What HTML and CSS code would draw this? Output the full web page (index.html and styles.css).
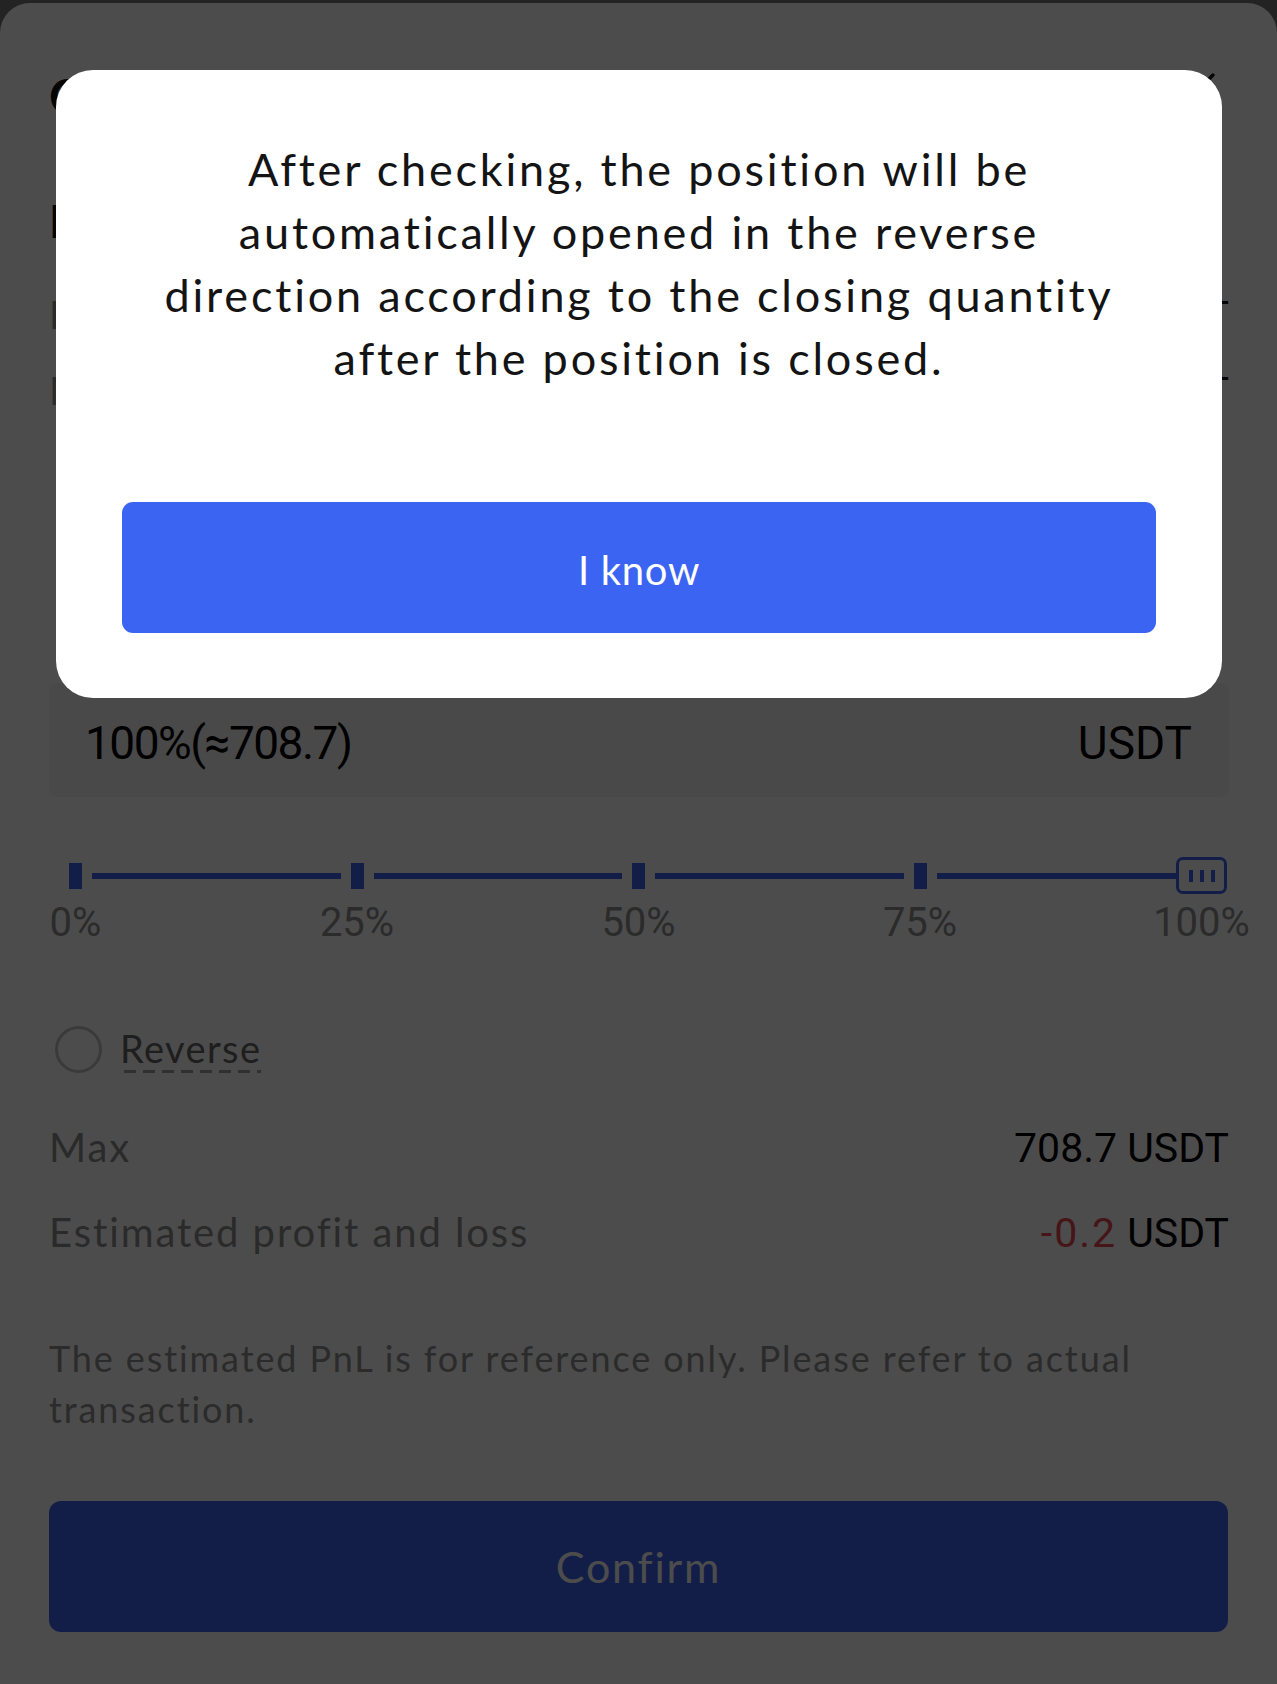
FILE: index.html
```html
<!DOCTYPE html>
<html lang="en">
<head>
<meta charset="utf-8">
<title>Close Position</title>
<link rel="stylesheet" href="styles.css">
</head>
<body>
<div class="sheet">
  <header class="sheet-head">
    <h1 class="title">Close Position</h1>
    <svg class="close" viewBox="0 0 28 28" aria-hidden="true"><path d="M3 3 L25 25 M25 3 L3 25" stroke="#111" stroke-width="3.5" stroke-linecap="round" fill="none"/></svg>
  </header>
  <div class="pair">BTCUSDT</div>
  <div class="info info-first"><span class="label">Entry</span><span class="val">USDT</span></div>
  <div class="info info-second"><span class="label">Mark</span><span class="val">USDT</span></div>

  <div class="qty-box"><span class="qty-val">100%(≈708.7)</span><span>USDT</span></div>

  <div class="slider">
    <span class="tick"></span><span class="seg"></span>
    <span class="tick"></span><span class="seg"></span>
    <span class="tick"></span><span class="seg"></span>
    <span class="tick"></span><span class="seg"></span>
    <span class="handle"><i></i><i></i><i></i></span>
  </div>
  <div class="scale">
    <span>0%</span><span>25%</span><span>50%</span><span>75%</span><span>100%</span>
  </div>

  <div class="reverse">
    <span class="radio"></span>
    <span class="reverse-text">Reverse</span>
  </div>

  <div class="kv kv-max"><span class="k">Max</span><span class="v">708.7 USDT</span></div>
  <div class="kv kv-est"><span class="k">Estimated profit and loss</span><span class="v"><span class="neg">-0.2</span> USDT</span></div>

  <p class="disclaimer">The estimated PnL is for reference only. Please refer to actual transaction.</p>

  <button class="confirm">Confirm</button>
</div>

<div class="overlay"></div>

<div class="modal">
  <p class="modal-text">After checking, the position will be<br>automatically opened in the reverse<br>direction according to the closing quantity<br>after the position is closed.</p>
  <button class="modal-btn">I know</button>
</div>
</body>
</html>
```

FILE: styles.css
```css
html, body {
  margin: 0;
  padding: 0;
}
body {
  background: #757575;
  font-family: Lato, "Noto Sans", sans-serif;
  overflow: hidden;
  height: 1684px;
}

.sheet {
  margin-top: 3px;
  height: 1681px;
  box-sizing: border-box;
  padding: 0 48px 0 49px;
  background: #fff;
  border-radius: 30px 30px 0 0;
}

.sheet-head {
  display: flex;
  justify-content: space-between;
  align-items: flex-start;
  padding-top: 69px;
}
.title {
  margin: 0;
  font-size: 48px;
  line-height: 48px;
  font-weight: 700;
  color: #111;
}
.close {
  width: 28px;
  height: 28px;
  margin-right: 13px;
}

.pair {
  margin-top: 79px;
  font-size: 45px;
  line-height: 45px;
  font-weight: 700;
  color: #111;
}

.info {
  display: flex;
  justify-content: space-between;
  align-items: baseline;
  height: 39px;
  font-size: 39px;
  line-height: 39px;
}
.info-first { margin-top: 51px; }
.info-second { margin-top: 37px; }
.info .label { color: #909090; }
.info .val { font-family: Roboto, sans-serif; color: #111; }

.qty-box {
  margin-top: 273px;
  height: 114px;
  box-sizing: border-box;
  padding: 6px 37px 0 36px;
  display: flex;
  justify-content: space-between;
  align-items: center;
  background: #f6f6f6;
  border-radius: 8px;
  font-family: Roboto, sans-serif;
  font-size: 46px;
  color: #000;
}
.qty-val { letter-spacing: -1.5px; }

.slider {
  margin: 60px 27.5px 0 26.5px;
  height: 37px;
  display: flex;
  align-items: center;
}
.tick {
  flex: none;
  width: 13px;
  height: 26px;
  margin: 0 -6.5px;
  background: #3c64f2;
}
.seg {
  flex: 1;
  height: 6px;
  margin: 0 16.5px;
  background: #3c64f2;
}
.handle {
  flex: none;
  width: 51px;
  height: 37px;
  margin: 0 -25.5px;
  box-sizing: border-box;
  border: 3px solid #3c64f2;
  border-radius: 7px;
  background: #fff;
  display: flex;
  justify-content: center;
  align-items: center;
  gap: 7px;
}
.handle i {
  width: 4px;
  height: 12px;
  background: #3c64f2;
}

.scale {
  margin: 9px 27.5px 0 26.5px;
  height: 40px;
  display: flex;
  justify-content: space-between;
  font-family: Roboto, sans-serif;
  font-size: 40px;
  line-height: 40px;
  color: #909090;
}
.scale span {
  width: 0;
  display: flex;
  justify-content: center;
  white-space: nowrap;
}

.reverse {
  margin-top: 83px;
  display: flex;
  align-items: flex-end;
}
.radio {
  width: 47px;
  height: 47px;
  box-sizing: border-box;
  border: 3px solid #c4c4c4;
  border-radius: 50%;
  margin-left: 6px;
}
.reverse-text {
  margin-left: 18px;
  font-size: 38px;
  line-height: 38px;
  letter-spacing: 1.4px;
  padding-bottom: 6px;
  color: #666;
  background: repeating-linear-gradient(to right, #a0a0a0 0 12px, transparent 12px 19px) 4px bottom / calc(100% - 4px) 3px no-repeat;
}

.kv {
  display: flex;
  justify-content: space-between;
  align-items: baseline;
  height: 40px;
  line-height: 40px;
}
.kv-max { margin-top: 53.5px; }
.kv-est { margin-top: 45px; }
.kv .k {
  font-size: 40px;
  letter-spacing: 1.9px;
  color: #8e8e8e;
}
.kv .v {
  font-family: Roboto, sans-serif;
  font-size: 41px;
  color: #000;
}
.kv .neg {
  color: #e8484f;
  letter-spacing: 2px;
}

.disclaimer {
  margin: 81px 0 0;
  max-width: 1110px;
  font-size: 36px;
  line-height: 51px;
  letter-spacing: 1.9px;
  color: #909090;
}

.confirm {
  margin-top: 66px;
  width: 1179px;
  height: 131px;
  display: flex;
  align-items: center;
  justify-content: center;
  border: none;
  border-radius: 12px;
  background: #3c64f2;
  color: #fff;
  font-family: inherit;
  font-size: 43px;
  letter-spacing: 1.8px;
  padding: 0;
}

.overlay {
  position: fixed;
  inset: 0;
  background: rgba(0, 0, 0, 0.7);
}

.modal {
  position: absolute;
  left: 56px;
  top: 70px;
  width: 1166px;
  box-sizing: border-box;
  padding: 68px 66px 65px;
  background: #fff;
  border-radius: 37px;
  text-align: center;
}
.modal-text {
  margin: 0;
  font-size: 45px;
  line-height: 63px;
  letter-spacing: 2.8px;
  color: #141414;
}
.modal-btn {
  display: flex;
  align-items: center;
  justify-content: center;
  margin-top: 112px;
  width: 100%;
  height: 131px;
  padding: 4px 0 0;
  border: none;
  border-radius: 11px;
  background: #3c64f2;
  color: #fff;
  font-family: inherit;
  font-size: 40px;
  letter-spacing: 0.7px;
}
```
